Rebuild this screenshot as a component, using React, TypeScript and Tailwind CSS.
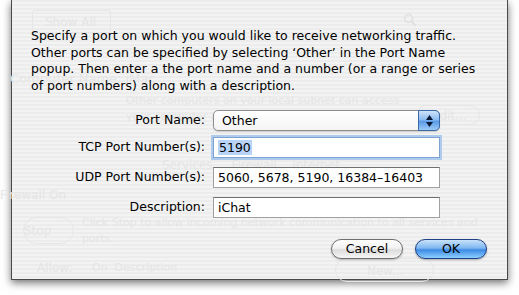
import React from "react";

const font = { fontFamily: '"DejaVu Sans", "Liberation Sans", sans-serif' };

function Ghost({ className, children }: { className: string; children: React.ReactNode }) {
  return <div className={"absolute whitespace-nowrap text-[#e5e5e5] " + className}>{children}</div>;
}

function Field({ label, children, focus }: { label: string; children: React.ReactNode; focus?: boolean }) {
  return (
    <div className="flex items-center h-[21px]">
      <div className="w-[182px] text-right pr-[8px] whitespace-nowrap">{label}</div>
      <div
        className={
          "h-[21px] w-[227px] bg-white pl-[4px] leading-[19px] whitespace-nowrap " +
          (focus
            ? "border border-[#7da3d3] shadow-[0_0_0_2px_#aecaec]"
            : "border border-[#a0a0a0] border-t-[#707070]")
        }
      >
        {children}
      </div>
    </div>
  );
}

export default function App() {
  return (
    <div className="w-[519px] h-[295px] bg-white overflow-hidden" style={font}>
      <div className="relative ml-[11px] w-[497px] h-[280px] border-x border-b border-[#4a4a4a] shadow-[0_3px_8px_rgba(0,0,0,0.55)] bg-[image:repeating-linear-gradient(180deg,#ececec_0px,#ececec_2px,#f3f3f3_2px,#f3f3f3_4px)] text-[12.5px] text-black">
        {/* faint window content seen through the translucent sheet */}
        <div className="absolute inset-0">
          <div className="absolute left-[20px] top-[10px] w-[79px] h-[23px] border border-[#e6e6e6] rounded-[3px]" />
          <Ghost className="left-[33px] top-[13px] text-[12px]">Show All</Ghost>
          <Ghost className="left-[-2px] top-[69px] text-[13px]">Computer Name: iMac</Ghost>
          <Ghost className="left-[114px] top-[93px] text-[11px]">Other computers on your local subnet can access</Ghost>
          <Ghost className="left-[114px] top-[109px] text-[11px]">your computer at ...</Ghost>
          <div className="absolute left-[404px] top-[105px] w-[64px] h-[20px] border border-[#e6e6e6] rounded-full" />
          <Ghost className="left-[420px] top-[107px] text-[12px]">Edit...</Ghost>
          <Ghost className="left-[150px] top-[156px] text-[12px]">Services &nbsp;&nbsp;&nbsp;&nbsp;Firewall &nbsp;&nbsp;&nbsp;Internet</Ghost>
          <Ghost className="left-[-12px] top-[186px] text-[12px]">Firewall On</Ghost>
          <div className="absolute left-[11px] top-[217px] w-[51px] h-[27px] border border-[#e6e6e6] rounded-full" />
          <Ghost className="left-[12px] top-[222px] text-[12px]">Stop</Ghost>
          <Ghost className="left-[70px] top-[215px] text-[11px]">Click Stop to allow incoming network communication to all services and</Ghost>
          <Ghost className="left-[70px] top-[231px] text-[11px]">ports.</Ghost>
          <Ghost className="left-[25px] top-[259px] text-[12px]">Allow:</Ghost>
          <Ghost className="left-[80px] top-[260px] text-[11px]">On &nbsp;Description</Ghost>
          <div className="absolute left-[323px] top-[258px] w-[99px] h-[24px] border border-[#e6e6e6] rounded-full" />
          <Ghost className="left-[355px] top-[262px] text-[12px]">New...</Ghost>
          <svg className="absolute left-[391px] top-[13px]" width="14" height="14" viewBox="0 0 14 14">
            <circle cx="5.5" cy="5.5" r="4" fill="none" stroke="#e0e0e0" strokeWidth="1.5" />
            <path d="M8.5 8.5 L12.5 12.5" stroke="#e0e0e0" strokeWidth="2" />
          </svg>
        </div>

        {/* sheet content */}
        <div className="relative flex flex-col pl-[19px] pt-[28px]">
          <p className="leading-[16.5px] whitespace-nowrap">
            Specify a port on which you would like to receive networking traffic.
            <br />
            Other ports can be specified by selecting ‘Other’ in the Port Name
            <br />
            popup. Then enter a the port name and a number (or a range or series
            <br />
            of port numbers) along with a description.
          </p>

          <div className="flex flex-col mt-[16px]">
            <div className="flex items-center h-[21px] mb-[6px]">
              <div className="w-[182px] text-right pr-[8px]">Port Name:</div>
              <div className="flex h-[21px] w-[227px] rounded-[5px] border border-[#8e8e8e] bg-[linear-gradient(180deg,#ffffff,#f4f4f4)] shadow-[0_1px_1px_rgba(0,0,0,0.15)]">
                <div className="flex-1 pl-[8px] leading-[19px]">Other</div>
                <div className="w-[22px] -my-px -mr-px rounded-r-[5px] border border-[#3b6aa8] bg-[linear-gradient(180deg,#cfe3fb_0%,#8cbcf0_45%,#5b9be6_55%,#9ccbf8_100%)] flex flex-col items-center justify-center gap-[2px]">
                  <svg width="7" height="5" viewBox="0 0 7 5"><path d="M3.5 0 L7 5 L0 5 Z" fill="#0a1a35" /></svg>
                  <svg width="7" height="5" viewBox="0 0 7 5"><path d="M0 0 L7 0 L3.5 5 Z" fill="#0a1a35" /></svg>
                </div>
              </div>
            </div>

            <div className="flex flex-col gap-[9px]">
              <Field label="TCP Port Number(s):" focus>
                <span className="bg-[#b7d3f7] px-[1px]">5190</span>
              </Field>
              <Field label="UDP Port Number(s):">5060, 5678, 5190, 16384–16403</Field>
              <Field label="Description:">iChat</Field>
            </div>
          </div>

          <div className="flex justify-end gap-[12px] pr-[20px] mt-[21px]">
            <div className="w-[72px] h-[20px] rounded-full border border-[#6e6e6e] bg-[linear-gradient(180deg,#ffffff_0%,#f2f2f2_45%,#dcdcdc_55%,#f6f6f6_100%)] shadow-[0_1px_2px_rgba(0,0,0,0.25)] flex items-center justify-center leading-none">
              Cancel
            </div>
            <div className="w-[72px] h-[20px] rounded-full border border-[#1f3f86] bg-[linear-gradient(180deg,#c9e2fb_0%,#7db7f0_45%,#3d8ae4_55%,#8cd0ff_100%)] shadow-[0_1px_2px_rgba(0,0,0,0.3)] flex items-center justify-center leading-none">
              OK
            </div>
          </div>
        </div>
      </div>
    </div>
  );
}
